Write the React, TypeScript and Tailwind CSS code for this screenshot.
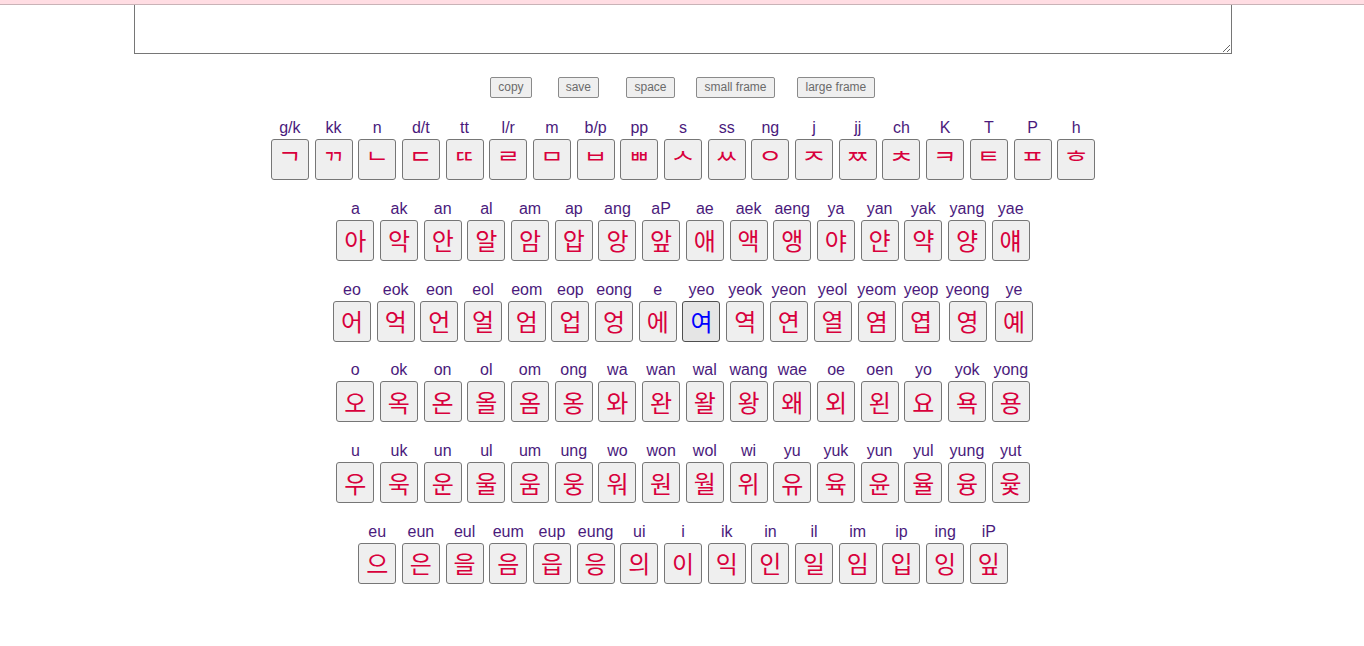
import React from "react";

type Key = { label: string; ch: string; active?: boolean };

const mk = (pairs: string): Key[] =>
  pairs.split(" ").map((p) => {
    const [label, ch] = p.split(":");
    return { label, ch };
  });

const consonants: Key[] = [
  { label: "g/k", ch: "\u1100" },
  { label: "kk", ch: "\u1101" },
  { label: "n", ch: "\u1102" },
  { label: "d/t", ch: "\u1103" },
  { label: "tt", ch: "\u1104" },
  { label: "l/r", ch: "\u1105" },
  { label: "m", ch: "\u1106" },
  { label: "b/p", ch: "\u1107" },
  { label: "pp", ch: "\u1108" },
  { label: "s", ch: "\u1109" },
  { label: "ss", ch: "\u110A" },
  { label: "ng", ch: "\u110B" },
  { label: "j", ch: "\u110C" },
  { label: "jj", ch: "\u110D" },
  { label: "ch", ch: "\u110E" },
  { label: "K", ch: "\u110F" },
  { label: "T", ch: "\u1110" },
  { label: "P", ch: "\u1111" },
  { label: "h", ch: "\u1112" },
];

const rows: Key[][] = [
  consonants,
  mk("a:아 ak:악 an:안 al:알 am:암 ap:압 ang:앙 aP:앞 ae:애 aek:액 aeng:앵 ya:야 yan:얀 yak:약 yang:양 yae:얘"),
  mk("eo:어 eok:억 eon:언 eol:얼 eom:엄 eop:업 eong:엉 e:에 yeo:여 yeok:역 yeon:연 yeol:열 yeom:염 yeop:엽 yeong:영 ye:예").map(
    (k) => (k.label === "yeo" ? { ...k, active: true } : k)
  ),
  mk("o:오 ok:옥 on:온 ol:올 om:옴 ong:옹 wa:와 wan:완 wal:왈 wang:왕 wae:왜 oe:외 oen:왼 yo:요 yok:욕 yong:용"),
  mk("u:우 uk:욱 un:운 ul:울 um:움 ung:웅 wo:워 won:원 wol:월 wi:위 yu:유 yuk:육 yun:윤 yul:율 yung:융 yut:윷"),
  mk("eu:으 eun:은 eul:을 eum:음 eup:읍 eung:응 ui:의 i:이 ik:익 in:인 il:일 im:임 ip:입 ing:잉 iP:잎"),
];

const tools = [
  { text: "copy", cls: "px-[7px]" },
  { text: "save", cls: "ml-[26px] px-[7px]" },
  { text: "space", cls: "ml-[27px] px-[7.5px]" },
  { text: "small frame", cls: "ml-[21px] px-[7.5px]" },
  { text: "large frame", cls: "ml-[22px] px-[7.5px]" },
];

const App = () => {
  return (
    <div className="min-h-screen bg-white font-['Liberation_Sans',Arial,sans-serif]">
      {/* Header strip */}
      <div className="h-[5px] bg-[#ffdde3] border-b border-[#c9b3b7]" />

      <div className="w-[1098px] ml-[134px]">
        <textarea className="block w-full h-[49px] border border-t-0 border-[#767676] bg-white outline-none" />
      </div>

      {/* Toolbar */}
      <div className="flex justify-center mt-[23px] pl-[1px]">
        {tools.map((t) => (
          <button
            key={t.text}
            className={`${t.cls} h-[21px] text-[12px] leading-[19px] text-[#6b6b6b] bg-[#efefef] border border-[#8a8a8a] rounded-[2px]`}
          >
            {t.text}
          </button>
        ))}
      </div>

      {/* Keyboard */}
      <div className="mt-[20px] flex flex-col gap-[18.8px] pl-[2px]">
        {rows.map((row, i) => (
          <div key={i} className="flex justify-center gap-[5.7px]">
            {row.map((k) => (
              <div key={k.label} className="flex flex-col items-center">
                <span className="block text-[16px] leading-[19px] text-[#4a1a7c] whitespace-nowrap">
                  {k.label}
                </span>
                <button
                  className={`mt-[2px] w-[38px] h-[41px] flex items-center justify-center rounded-[3px] border text-[24px] font-['Noto_Sans_CJK_KR',sans-serif] ${
                    k.active
                      ? "bg-[#e5e5e5] border-[#4f4f4f] text-[#0000ff]"
                      : "bg-[#efefef] border-[#767676] text-[#d8003c]"
                  }`}
                >
                  {k.ch}
                </button>
              </div>
            ))}
          </div>
        ))}
      </div>
    </div>
  );
};

export default App;
